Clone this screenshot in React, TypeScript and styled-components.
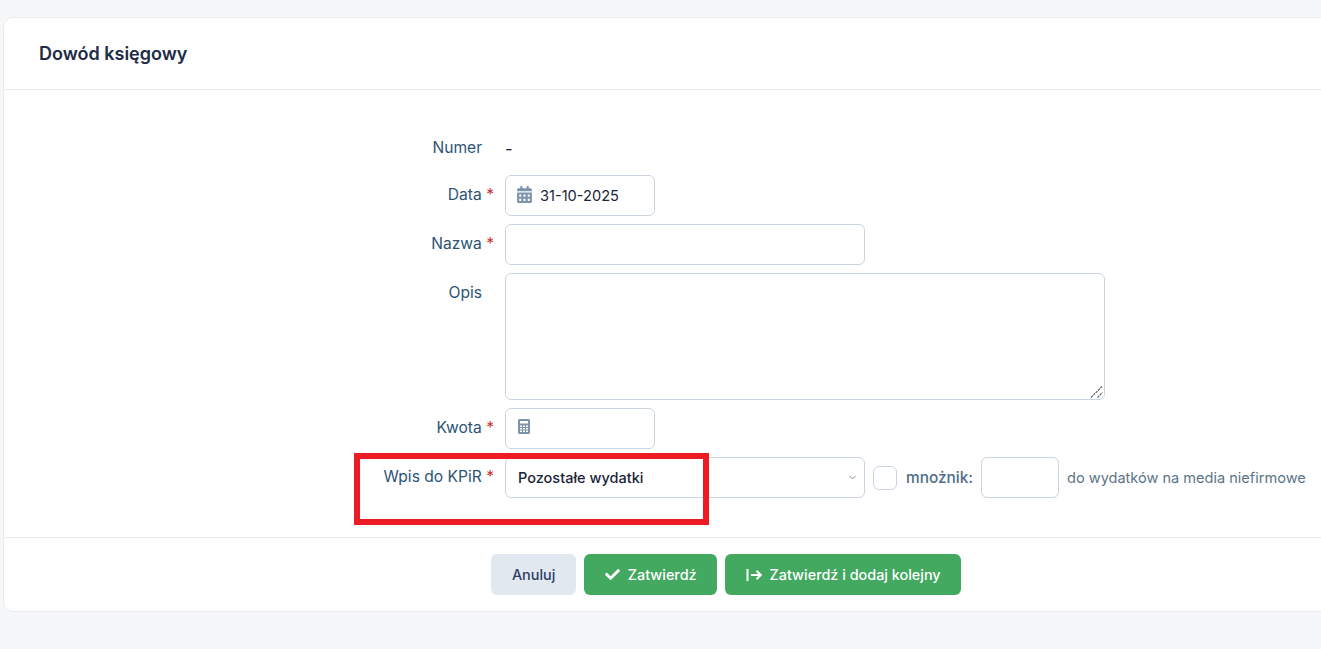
import React from "react";
import styled, { createGlobalStyle } from "styled-components";
import { FaCalendarAlt, FaCheck } from "react-icons/fa";
import { ChevronDown } from "lucide-react";

const Global = createGlobalStyle`
  html, body { margin: 0; padding: 0; height: 649px; overflow: hidden; background: #f6f7f9; }
  body { font-family: Inter, "Noto Sans", sans-serif; font-size: 14.55px; color: #1a202c; }
  * { box-sizing: border-box; }
`;

const Page = styled.div`
  position: relative;
  width: 1321px;
  height: 649px;
  overflow: hidden;
  padding: 17px 0 0 3px;
`;

const Card = styled.section`
  width: 1340px;
  height: 595px;
  background: #fff;
  border: 1px solid #e9ebef;
  border-radius: 10px;
  display: flex;
  flex-direction: column;
`;

const Header = styled.header`
  height: 72px;
  padding: 0 35px;
  display: flex;
  align-items: center;
  border-bottom: 1px solid #e9ebef;
`;

const Title = styled.h2`
  margin: 0;
  font-size: 18px;
  font-weight: 600;
  color: #1e2b45;
`;

const Form = styled.div`
  flex: 1;
  padding: 36px 0 0;
  display: flex;
  flex-direction: column;
  gap: 8px;
`;

const Row = styled.div`
  display: grid;
  grid-template-columns: 490px 1fr;
  column-gap: 11px;
`;

const Label = styled.label<{ $offset?: number }>`
  text-align: right;
  line-height: 20px;
  padding-top: ${(p) => p.$offset ?? 10}px;
  color: #2b5475;
  font-size: 15.6px;
`;

const Star = styled.span`
  color: #c53030;
`;

const Blank = styled.span`
  display: inline-block;
  width: 12px;
`;

const Value = styled.div`
  height: 41px;
  display: flex;
  align-items: center;
  font-size: 16.5px;
  padding-top: 4px;
  color: #1e293b;
`;

const Control = styled.div<{ $w: number }>`
  position: relative;
  width: ${(p) => p.$w}px;
  height: 41px;
  flex: none;
`;

const Input = styled.input<{ $pad?: number }>`
  width: 100%;
  height: 41px;
  border: 1px solid #cbd5e0;
  border-radius: 6px;
  background: #fff;
  padding: 0 12px 0 ${(p) => p.$pad ?? 12}px;
  font: 14.6px Inter, sans-serif;
  color: #1a2438;
  outline: none;
  display: block;
`;

const FieldIcon = styled.span<{ $left: number; $size: number }>`
  position: absolute;
  left: ${(p) => p.$left}px;
  top: 11px;
  display: flex;
  color: #7d93ab;
  font-size: ${(p) => p.$size}px;
`;

const AreaWrap = styled.div`
  position: relative;
  width: 600px;
  height: 127px;
`;

const Area = styled.textarea`
  display: block;
  width: 100%;
  height: 100%;
  resize: none;
  border: 1px solid #cbd5e0;
  border-radius: 6px;
  background: #fff;
  outline: none;
  padding: 8px 12px;
  font: 14.6px Inter, sans-serif;
`;

const Grip = styled.svg`
  position: absolute;
  right: 1px;
  bottom: 1px;
`;

const Inline = styled.div`
  display: flex;
  align-items: center;
`;

const Select = styled.select`
  width: 100%;
  height: 41px;
  appearance: none;
  border: 1px solid #cbd5e0;
  border-radius: 6px;
  background: #fff;
  padding: 0 12px;
  font: 500 14.5px Inter, sans-serif;
  color: #1a2438;
  outline: none;
  display: block;
`;

const Caret = styled.span`
  position: absolute;
  right: 7px;
  top: 15px;
  display: flex;
  color: #718096;
`;

const Check = styled.input.attrs({ type: "checkbox" })`
  appearance: none;
  width: 24px;
  height: 24px;
  margin: 0 9px 0 8px;
  border: 1px solid #cbd5e0;
  border-radius: 6px;
  background: #fff;
  flex: none;
`;

const Multi = styled.span`
  font-weight: 500;
  font-size: 15.4px;
  color: #4f6d8a;
  width: 75px;
  white-space: nowrap;
`;

const Hint = styled.span`
  margin-left: 8px;
  color: #5d7488;
  white-space: nowrap;
`;

const Footer = styled.footer`
  height: 74px;
  border-top: 1px solid #e9ebef;
  padding: 16px 0 0 106px;
  display: flex;
  justify-content: center;
  gap: 8px;
`;

const Button = styled.button<{ $primary?: boolean }>`
  height: 41px;
  padding: 0 ${(p) => (p.$primary ? 20.5 : 21)}px;
  border: 0;
  border-radius: 6px;
  background: ${(p) => (p.$primary ? "#43a860" : "#e2e8f0")};
  color: ${(p) => (p.$primary ? "#fff" : "#2c3e66")};
  font: 500 14.4px Inter, sans-serif;
  display: inline-flex;
  align-items: center;
  gap: 8px;
`;

const Highlight = styled.div`
  position: absolute;
  left: 354px;
  top: 453px;
  width: 355px;
  height: 72px;
  border: 6px solid #ed1c24;
  pointer-events: none;
`;

const CalculatorIcon = () => (
  <svg width="12" height="15" viewBox="0 0 12 15" fill="currentColor">
    <path
      fillRule="evenodd"
      d="M1.5 0h9A1.5 1.5 0 0 1 12 1.5v12a1.5 1.5 0 0 1-1.5 1.5h-9A1.5 1.5 0 0 1 0 13.5v-12A1.5 1.5 0 0 1 1.5 0ZM2 2v2.6h8V2H2Zm0 4.4v1.5h2V6.400H2Zm3 0v1.5h2V6.4H5Zm3 0v1.500h2V6.4H8ZM2 9v1.500h2V9H2Zm3 0v1.500h2V9H5Zm3 0v1.500h2V9H8ZM2 11.500V13h2v-1.500H2Zm3 0V13h2v-1.500H5Zm3 0V13h2v-1.500H8Z"
    />
  </svg>
);

export default function App() {
  return (
    <Page>
      <Global />
      <Card>
        <Header>
          <Title>Dowód księgowy</Title>
        </Header>
        <Form>
          <Row>
            <Label $offset={12}>Numer<Blank /></Label>
            <Value>-</Value>
          </Row>
          <Row>
            <Label>Data <Star>*</Star></Label>
            <Control $w={150}>
              <Input $pad={34} defaultValue="31-10-2025" />
              <FieldIcon $left={11} $size={17}><FaCalendarAlt /></FieldIcon>
            </Control>
          </Row>
          <Row>
            <Label>Nazwa <Star>*</Star></Label>
            <Control $w={360}>
              <Input />
            </Control>
          </Row>
          <Row>
            <Label>Opis<Blank /></Label>
            <AreaWrap>
              <Area />
              <Grip width="14" height="14" viewBox="0 0 14 14" fill="none" stroke="#5a5a5a" strokeWidth="1.1" strokeDasharray="2.5 0.8">
                <path d="M1 12.5 12 1.5" />
                <path d="M7.500 12.500 12.500 7.500" />
              </Grip>
            </AreaWrap>
          </Row>
          <Row>
            <Label>Kwota <Star>*</Star></Label>
            <Control $w={150}>
              <Input $pad={34} />
              <FieldIcon $left={13} $size={15}><CalculatorIcon /></FieldIcon>
            </Control>
          </Row>
          <Row>
            <Label>Wpis do KPiR <Star>*</Star></Label>
            <Inline>
              <Control $w={360}>
                <Select defaultValue="p">
                  <option value="p">Pozostałe wydatki</option>
                </Select>
                <Caret><ChevronDown size={11} /></Caret>
              </Control>
              <Check />
              <Multi>mnożnik:</Multi>
              <Control $w={78}>
                <Input />
              </Control>
              <Hint>do wydatków na media niefirmowe</Hint>
            </Inline>
          </Row>
        </Form>
        <Footer>
          <Button>Anuluj</Button>
          <Button $primary><FaCheck size={15} />Zatwierdź</Button>
          <Button $primary>
            <svg width="16" height="14" viewBox="0 0 16 14" fill="none" stroke="#fff" strokeWidth="2">
              <path d="M1.500 1v12" />
              <path d="M5 7h9.500" />
              <path d="M10.500 2.800 14.800 7l-4.300 4.200" />
            </svg>
            Zatwierdź i dodaj kolejny
          </Button>
        </Footer>
      </Card>
      <Highlight />
    </Page>
  );
}
